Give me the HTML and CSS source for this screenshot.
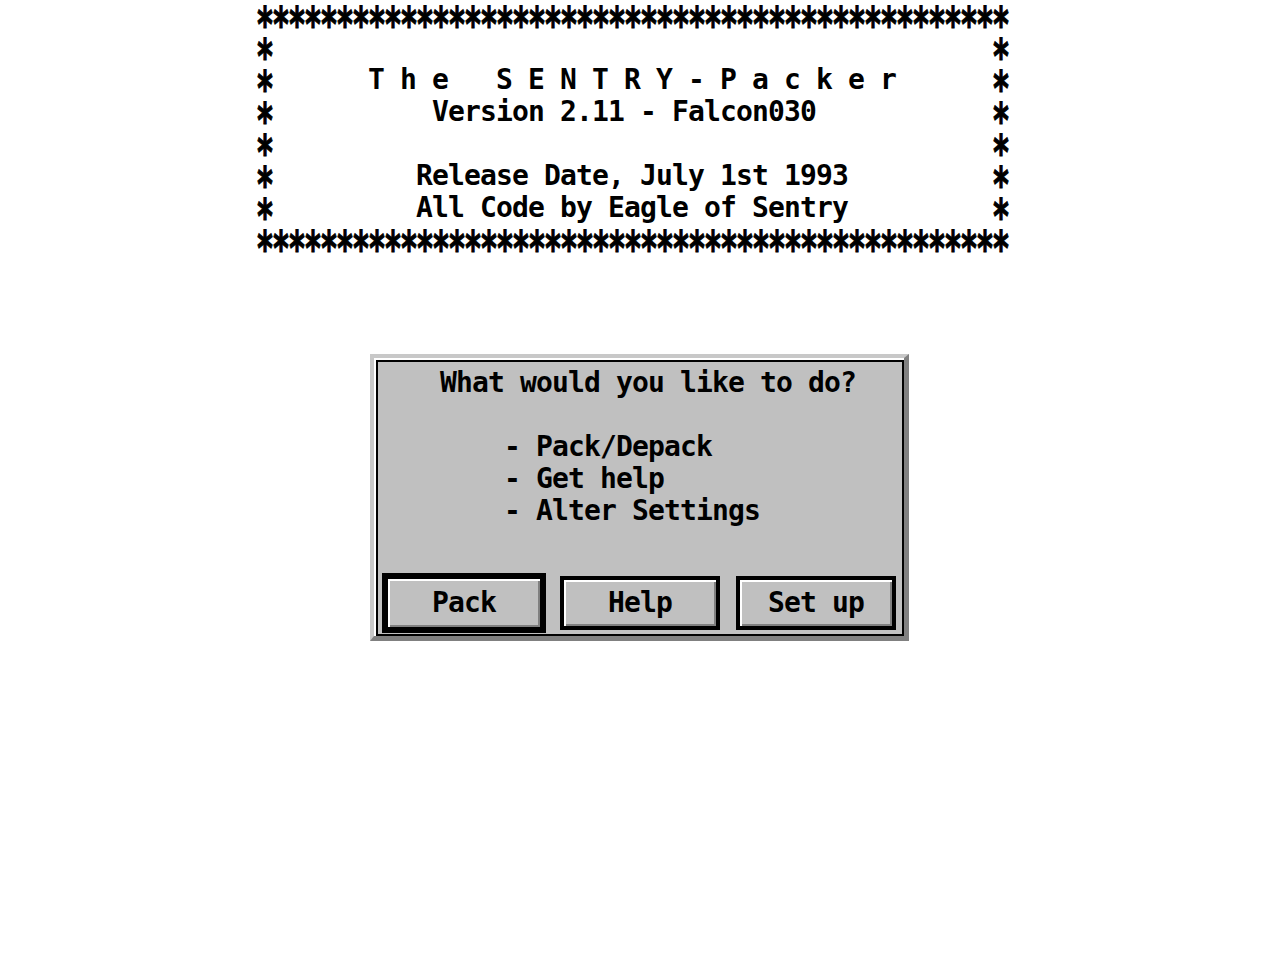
FILE: index.html
```html
<!DOCTYPE html>
<html>
<head>
<meta charset="utf-8">
<title>The SENTRY-Packer</title>
<link rel="stylesheet" href="styles.css">
</head>
<body>
<div class="screen">
  <div class="banner">
    <div class="row"><span class="s">*</span><span class="s">*</span><span class="s">*</span><span class="s">*</span><span class="s">*</span><span class="s">*</span><span class="s">*</span><span class="s">*</span><span class="s">*</span><span class="s">*</span><span class="s">*</span><span class="s">*</span><span class="s">*</span><span class="s">*</span><span class="s">*</span><span class="s">*</span><span class="s">*</span><span class="s">*</span><span class="s">*</span><span class="s">*</span><span class="s">*</span><span class="s">*</span><span class="s">*</span><span class="s">*</span><span class="s">*</span><span class="s">*</span><span class="s">*</span><span class="s">*</span><span class="s">*</span><span class="s">*</span><span class="s">*</span><span class="s">*</span><span class="s">*</span><span class="s">*</span><span class="s">*</span><span class="s">*</span><span class="s">*</span><span class="s">*</span><span class="s">*</span><span class="s">*</span><span class="s">*</span><span class="s">*</span><span class="s">*</span><span class="s">*</span><span class="s">*</span><span class="s">*</span><span class="s">*</span></div>
    <div class="row"><span class="s">*</span>                                             <span class="s">*</span></div>
    <div class="row"><span class="s">*</span>      T h e   S E N T R Y - P a c k e r      <span class="s">*</span></div>
    <div class="row"><span class="s">*</span>          Version 2.11 - Falcon030           <span class="s">*</span></div>
    <div class="row"><span class="s">*</span>                                             <span class="s">*</span></div>
    <div class="row"><span class="s">*</span>         Release Date, July 1st 1993         <span class="s">*</span></div>
    <div class="row"><span class="s">*</span>         All Code by Eagle of Sentry         <span class="s">*</span></div>
    <div class="row"><span class="s">*</span><span class="s">*</span><span class="s">*</span><span class="s">*</span><span class="s">*</span><span class="s">*</span><span class="s">*</span><span class="s">*</span><span class="s">*</span><span class="s">*</span><span class="s">*</span><span class="s">*</span><span class="s">*</span><span class="s">*</span><span class="s">*</span><span class="s">*</span><span class="s">*</span><span class="s">*</span><span class="s">*</span><span class="s">*</span><span class="s">*</span><span class="s">*</span><span class="s">*</span><span class="s">*</span><span class="s">*</span><span class="s">*</span><span class="s">*</span><span class="s">*</span><span class="s">*</span><span class="s">*</span><span class="s">*</span><span class="s">*</span><span class="s">*</span><span class="s">*</span><span class="s">*</span><span class="s">*</span><span class="s">*</span><span class="s">*</span><span class="s">*</span><span class="s">*</span><span class="s">*</span><span class="s">*</span><span class="s">*</span><span class="s">*</span><span class="s">*</span><span class="s">*</span><span class="s">*</span></div>
  </div>

  <div class="frame">
    <div class="dlg">
      <div class="msg">
        <div class="line">What would you like to do?</div>
        <div class="line"> </div>
        <div class="line">    - Pack/Depack</div>
        <div class="line">    - Get help</div>
        <div class="line">    - Alter Settings</div>
      </div>
      <div class="buttons">
        <div class="btn default">Pack</div>
        <div class="btn">Help</div>
        <div class="btn">Set up</div>
      </div>
    </div>
  </div>
</div>
</body>
</html>
```

FILE: styles.css
```css
html, body {
  margin: 0;
  padding: 0;
  background: #ffffff;
}

.screen {
  width: 1280px;
  height: 960px;
  font-family: "DejaVu Sans Mono", "Liberation Mono", monospace;
  font-weight: bold;
  font-size: 28px;
  letter-spacing: -0.86px;
  color: #000000;
}

.banner {
  padding-left: 256px;
}

.row {
  height: 32px;
  line-height: 32px;
  white-space: pre;
}

.s {
  display: inline-block;
  width: 16px;
  vertical-align: top;
  text-align: center;
  font-size: 30px;
  line-height: 32px;
  letter-spacing: 0;
  -webkit-text-stroke: 0.7px #000000;
  transform: translateY(9px) scaleY(1.6);
}

.frame {
  width: fit-content;
  margin-top: 98px;
  margin-left: 370px;
  border-top: 4px solid #c8c8c8;
  border-left: 4px solid #c8c8c8;
  border-right: 5px solid #808080;
  border-bottom: 5px solid #808080;
  padding: 2px 0 0 2px;
  background: #ffffff;
}

.dlg {
  width: 524px;
  height: 272px;
  border: 2px solid #000000;
  background: #c0c0c0;
}

.msg {
  padding-top: 5px;
  padding-left: 62px;
}

.line {
  height: 32px;
  line-height: 32px;
  white-space: pre;
}

.buttons {
  display: flex;
  align-items: center;
  gap: 16px;
  margin-top: 46px;
  padding-left: 6px;
}

.btn {
  box-sizing: border-box;
  width: 160px;
  height: 54px;
  border: 4px solid #000000;
  background: #c0c0c0;
  box-shadow: inset 2px 2px 0 #ffffff, inset -2px -2px 0 #808080;
  display: flex;
  align-items: center;
  justify-content: center;
  line-height: 32px;
  white-space: pre;
}

.btn.default {
  width: 164px;
  height: 60px;
  margin: 0 -2px;
  border-width: 6px;
}
```
